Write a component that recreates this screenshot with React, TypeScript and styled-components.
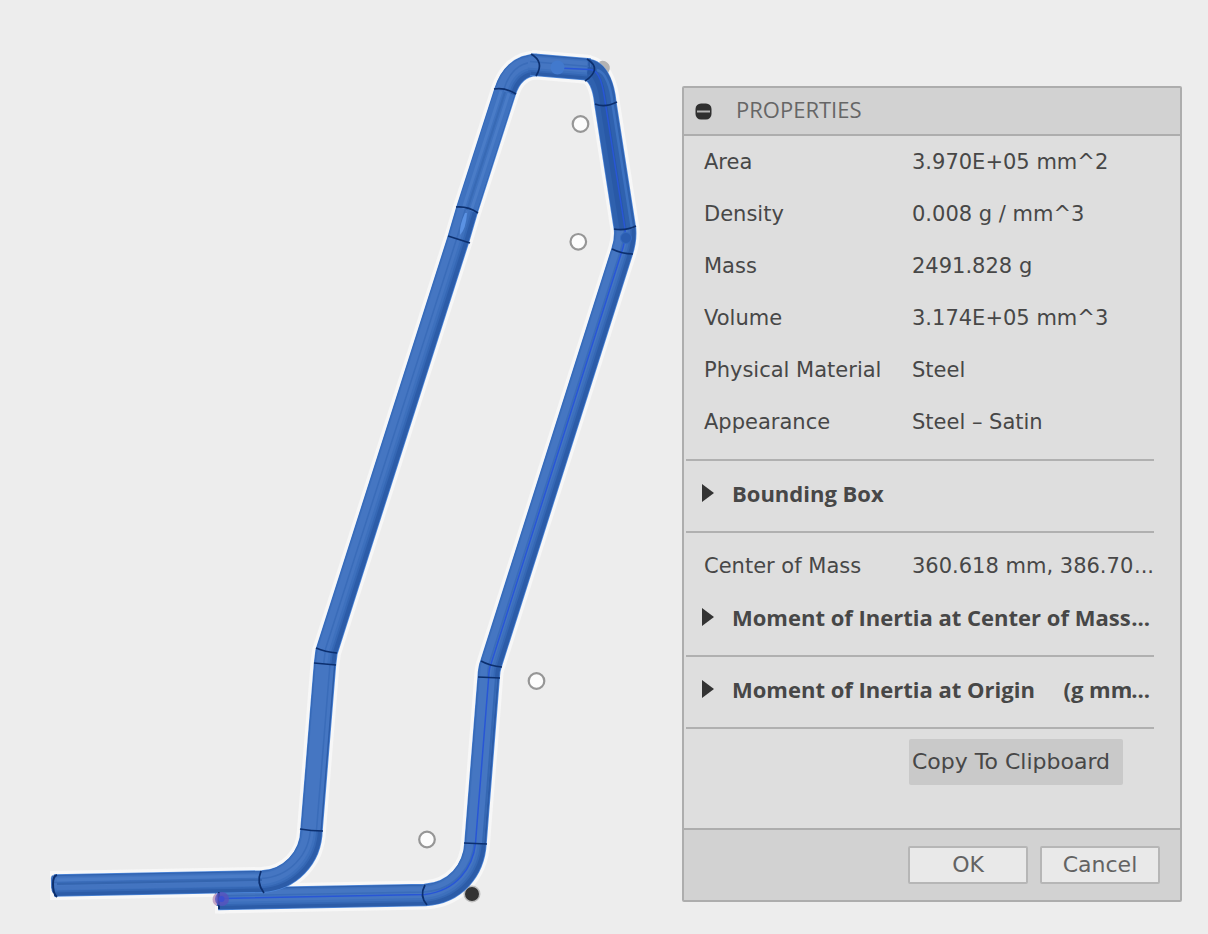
import React from "react";
import styled, { createGlobalStyle } from "styled-components";

const GlobalStyle = createGlobalStyle`
  *, *::before, *::after { box-sizing: border-box; }
  body {
    margin: 0;
    background: #ededed;
    color: #474747;
    font-family: "Lucida Grande", "DejaVu Sans", sans-serif;
    font-size: 21px;
    line-height: 28px;
  }
  button { font: inherit; color: inherit; margin: 0; }
`;

const boldFamily = `"Open Sans", "Noto Sans", sans-serif`;

const Workspace = styled.main`
  display: flex;
  align-items: flex-start;
  min-height: 100vh;
`;

const Viewport = styled.section`
  flex: 1;
  min-width: 0;
`;

const Drawing = styled.svg`
  display: block;
  width: 100%;
  height: auto;
`;

const Panel = styled.aside`
  flex: none;
  width: 500px;
  margin: 86px 26px 32px 0;
  border: 2px solid #adadad;
  border-radius: 2px;
  background: #dedede;
`;

const PanelHeader = styled.header`
  display: flex;
  align-items: center;
  gap: 24px;
  height: 48px;
  padding: 0 11px 4px;
  border-bottom: 2px solid #adadad;
  background: #d2d2d2;
`;

const CollapseButton = styled.button`
  display: flex;
  padding: 4px 0 0;
  border: 0;
  background: none;
`;

const Title = styled.h2`
  margin: 0;
  font-family: ${boldFamily};
  font-size: 22px;
  font-weight: 400;
  color: #666;
`;

const PanelBody = styled.div`
  padding: 0 26px 40px 2px;
`;

const List = styled.dl`
  margin: 0;
`;

const Row = styled.div`
  display: grid;
  grid-template-columns: 208px minmax(0, 1fr);
  align-items: center;
  height: 52px;
  padding: 0 0 0 18px;
`;

const Term = styled.dt`
  white-space: nowrap;
`;

const Detail = styled.dd`
  display: flex;
  margin: 0;
  white-space: nowrap;
`;

const Clip = styled.span`
  flex: 1;
  min-width: 0;
  overflow: hidden;
  text-align: left;
  white-space: pre;
`;

const Rule = styled.hr`
  height: 2px;
  margin: 11px 0 7px;
  border: 0;
  background: #b0b0b0;
`;

const Disclosure = styled.button`
  display: flex;
  align-items: center;
  width: 100%;
  height: 52px;
  padding: 0 4px 2px 16px;
  border: 0;
  background: none;
  font-family: ${boldFamily};
  font-size: 22px;
  font-weight: 700;
`;

const Arrow = styled.svg`
  flex: none;
  width: 12px;
  height: 18px;
  margin-right: 18px;
`;

const CopyRow = styled.div`
  display: flex;
  align-items: center;
  height: 52px;
  padding-left: 223px;
`;

const CopyButton = styled.button`
  width: 214px;
  height: 46px;
  padding: 0 3px;
  border: 0;
  border-radius: 2px;
  background: #c9c9c9;
  font-size: 22px;
  text-align: left;
  white-space: nowrap;
`;

const PanelFooter = styled.footer`
  display: flex;
  justify-content: flex-end;
  gap: 12px;
  padding: 16px 20px;
  border-top: 2px solid #adadad;
  background: #d2d2d2;
`;

const ActionButton = styled.button`
  width: 120px;
  height: 38px;
  padding: 0;
  border: 2px solid #b6b6b6;
  border-radius: 2px;
  background: #e9e9e9;
  color: #636363;
  font-size: 22px;
`;

const properties = [
  ["Area", "3.970E+05 mm^2"],
  ["Density", "0.008 g / mm^3"],
  ["Mass", "2491.828 g"],
  ["Volume", "3.174E+05 mm^3"],
  ["Physical Material", "Steel"],
  ["Appearance", "Steel – Satin"],
];

function Section({ label, cut }: { label: string; cut?: boolean }) {
  return (
    <Disclosure type="button" aria-expanded={false}>
      <Arrow viewBox="0 0 12 18" aria-hidden="true">
        <path d="M0 0 L12 9 L0 18 Z" fill="#333" />
      </Arrow>
      <Clip>{label}</Clip>
      {cut && <span>...</span>}
    </Disclosure>
  );
}

const leftTube =
  "M54 885.500 L262 881.500 C290 880 311 858 311.500 830 L325 664 L326.500 652 L458.500 239 L467 210 L505 92 C510 76 520 65 537 65";
const topTube = "M531 64.500 L590 69.500";
const rightTube =
  "M586 69.500 C599 71 604 88 605.500 104 L625 229 Q626 240 622 252 L491 664 Q489 669 488.700 677 L475.500 843 C474 870 456 893 425 895 L218 899";
const upperRight = "M590 70 C599 72 604 88 605.500 104 L625 229";

function Tube({ d }: { d: string }) {
  return (
    <g fill="none" strokeLinejoin="round">
      <path d={d} stroke="#4f89dc" strokeWidth="22.500" />
      <path d={d} stroke="#2c5ca8" strokeWidth="21" />
      <path d={d} stroke="#3567b4" strokeWidth="17" transform="translate(-2 -1.500)" />
      <path d={d} stroke="#3d70bd" strokeWidth="14.500" transform="translate(-2.500 -2)" />
      <path d={d} stroke="#4576c2" strokeWidth="11" transform="translate(-3 -2.500)" />
      <path d={d} stroke="#3a6cb9" strokeWidth="1.500" transform="translate(-1 -3)" />
    </g>
  );
}

function FrameModel() {
  return (
    <Drawing viewBox="0 0 682 934" role="img" aria-label="Bent tube frame">
      <g fill="none" stroke="#f7f7f7" strokeWidth="29" strokeLinejoin="round">
        <path d={leftTube} />
        <path d={topTube} />
        <path d={rightTube} />
        <path d="M50 885.500 H60" />
        <path d="M215 899 H225" />
      </g>
      <path d="M599 62 A7 7 0 0 1 609 71 L607 75 Z" fill="#b3b3b3" />
      <circle cx="472" cy="894" r="8.500" fill="#bdbdbd" />
      <circle cx="472" cy="894" r="7" fill="#333" />
      <Tube d={rightTube} />
      <Tube d={leftTube} />
      <Tube d={topTube} />

      <g fill="none">
        <path d={upperRight} stroke="#2f61ae" strokeWidth="20" />
        <path d={upperRight} stroke="#2959a6" strokeWidth="7" transform="translate(-2 0)" />
        <path d={upperRight} stroke="#3d72c1" strokeWidth="2.500" transform="translate(7 0)" />
        <path d="M467 210 L505 92" stroke="#3f72bf" strokeWidth="20" />
        <path d="M463 209 L501 91 M471 211 L509 93" stroke="#4a7cc7" strokeWidth="3" />
        <path d="M467 210 L505 92" stroke="#386ab5" strokeWidth="2" />
        <path d="M325 664 L311.500 830" stroke="#4576c2" strokeWidth="18" />
        <path d="M330 664 L316.500 830" stroke="#3a6cb9" strokeWidth="1.500" />
        <path d="M488.700 677 L475.500 843" stroke="#4576c2" strokeWidth="17" />
        <path d="M496 677 L483 843" stroke="#3567b2" strokeWidth="2" />
        <path d="M465 213 Q459 226 460 235 Q466 229 467 213 Z" fill="#5b92e3" />
        <path d="M57 880 L262 876" stroke="#4a7cc7" strokeWidth="3" />
        <path d="M57 888 L262 884" stroke="#4374c0" strokeWidth="4" />
        <path d="M57 884 L262 880" stroke="#3465af" strokeWidth="2" />
        <path
          d="M222 898.500 L425 894.500 C456 891 473 868 475.500 843 L488.700 677 Q489 668 491 664 L621 254 Q626 240 625 229 L605.500 104 C603 86 600 70 590 69.500 L558 68"
          stroke="#2856d6"
          strokeWidth="1.500"
        />
      </g>

      <g fill="none" stroke="#0c2f6e" strokeWidth="1.700">
        <path d="M494 89 Q505 87 516 94" />
        <path d="M531 54 Q545 62 536 76" />
        <path d="M587 59 Q603 69 585 81" />
        <path d="M595 104 Q605 108 617 102" />
        <path d="M614 229 Q626 231 636 226" />
        <path d="M612 249 Q622 254 633 254" />
        <path d="M456 207 Q468 206 478 213" />
        <path d="M448 236 L470 243" />
        <path d="M316 648 Q325 652 337 653" />
        <path d="M314 663 L336 665" />
        <path d="M481 661 Q490 666 502 667" />
        <path d="M478 677 L500 678" />
        <path d="M300 829 Q311 831 323 831" />
        <path d="M464 843 L487 844" />
        <path d="M261 871 Q256 883 264 893" />
        <path d="M425 885 Q419 896 427 905" />
        <path d="M57 875 Q53 876 53 884 Q53 894 57 897" strokeWidth="2" />
        <path d="M219 892 V909" strokeWidth="2" />
      </g>

      <circle cx="557.500" cy="67.500" r="7" fill="#4279cd" />
      <circle cx="626" cy="238" r="5.500" fill="#2b5db0" stroke="#356bc0" />
      <path d="M217 893 A7 7 0 0 0 217 906 Z" fill="#c3a6c5" />
      <circle cx="222" cy="899" r="7" fill="#5751bd" opacity="0.800" />
      <circle cx="221.500" cy="899" r="3" fill="#3c4fd0" />

      <g fill="#fcfcfc" stroke="#969696" strokeWidth="2.200">
        <circle cx="580.500" cy="124" r="7.800" />
        <circle cx="578.300" cy="241.800" r="7.800" />
        <circle cx="536.500" cy="681" r="7.800" />
        <circle cx="427" cy="839.500" r="7.800" />
      </g>
    </Drawing>
  );
}

export default function App() {
  return (
    <>
      <GlobalStyle />
      <Workspace>
        <Viewport>
          <FrameModel />
        </Viewport>
        <Panel aria-labelledby="panel-title">
          <PanelHeader>
            <CollapseButton type="button" aria-label="Collapse panel">
              <svg width="17" height="17" viewBox="0 0 17 17" aria-hidden="true">
                <rect x="0.500" y="0.500" width="16" height="16" rx="5.500" fill="#2f2f2f" />
                <path d="M2 8.500 H15" stroke="#b5b5b5" strokeWidth="2" />
              </svg>
            </CollapseButton>
            <Title id="panel-title">PROPERTIES</Title>
          </PanelHeader>
          <PanelBody>
            <List>
              {properties.map(([name, value]) => (
                <Row key={name}>
                  <Term>{name}</Term>
                  <Detail>{value}</Detail>
                </Row>
              ))}
            </List>
            <Rule />
            <Section label="Bounding Box" />
            <Rule />
            <List>
              <Row>
                <Term>Center of Mass</Term>
                <Detail>
                  <Clip>360.618 mm, 386.70</Clip>
                  <span>...</span>
                </Detail>
              </Row>
            </List>
            <Section label="Moment of Inertia at Center of Mass" cut />
            <Rule />
            <Section label={"Moment of Inertia at Origin\u00a0\u00a0\u00a0\u00a0\u00a0(g mm"} cut />
            <Rule />
            <CopyRow>
              <CopyButton type="button">Copy To Clipboard</CopyButton>
            </CopyRow>
          </PanelBody>
          <PanelFooter>
            <ActionButton type="button">OK</ActionButton>
            <ActionButton type="button">Cancel</ActionButton>
          </PanelFooter>
        </Panel>
      </Workspace>
    </>
  );
}
